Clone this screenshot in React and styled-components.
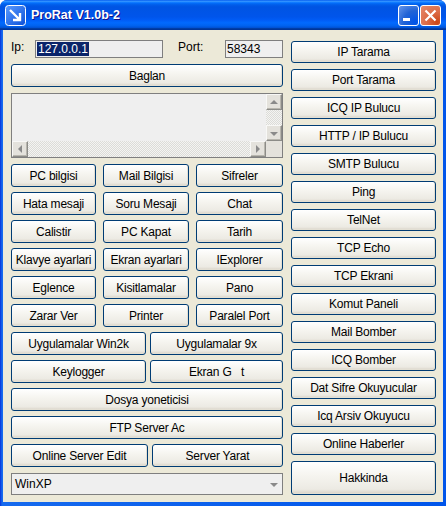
import React from "react";
import styled, { createGlobalStyle } from "styled-components";

const GlobalStyle = createGlobalStyle`
  body {
    margin: 0;
    background: #ffffff;
    font-family: "Liberation Sans", Arial, sans-serif;
  }
`;

const Window = styled.div`
  width: 446px;
  height: 506px;
  display: flex;
  flex-direction: column;
  border-radius: 7px 7px 0 0;
  overflow: hidden;
  background: #0842e0;
`;

const TitleBar = styled.div`
  height: 30px;
  flex: none;
  display: flex;
  align-items: center;
  padding: 0 5px;
  box-sizing: border-box;
  background: linear-gradient(
    180deg,
    #0058ee 0%,
    #3593ff 4%,
    #288eff 6%,
    #127dff 8%,
    #036ffc 10%,
    #0262ee 14%,
    #0057e5 20%,
    #0054e3 24%,
    #0055eb 56%,
    #005bf5 66%,
    #026afe 76%,
    #0062ef 86%,
    #0052d6 92%,
    #0040ab 94%,
    #003092 100%
  );
`;

const Title = styled.span`
  margin-left: 5px;
  color: #fff;
  font-weight: bold;
  font-size: 12.5px;
  text-shadow: 1px 1px #0f1089;
  flex: 1;
`;

const CaptionButtons = styled.div`
  display: flex;
  gap: 1px;
  margin-top: 1px;
`;

const CaptionButton = styled.div`
  width: 21px;
  height: 21px;
  box-sizing: border-box;
  border: 1px solid #fff;
  border-radius: 3px;
  display: flex;
  align-items: center;
  justify-content: center;
  background: ${(p) =>
    p.$close
      ? "radial-gradient(circle at 85% 85%, #cc4616 0%, #dc6b46 45%, #e58a6c 100%)"
      : "radial-gradient(circle at 85% 85%, #0054e9 0%, #2263d5 50%, #6696eb 100%)"};
`;

const Frame = styled.div`
  flex: 1;
  display: flex;
  padding: 0 3px 4px 3px;
  background: linear-gradient(90deg, #0831d9, #166aee 2px, #0055ea);
`;

const Body = styled.div`
  flex: 1;
  display: flex;
  gap: 8px;
  padding: 10px 7px 0 8px;
  background: #ece9d8;
  font-size: 12px;
  color: #000;
`;

const LeftCol = styled.div`
  width: 272px;
  display: flex;
  flex-direction: column;
  gap: 6px;
`;

const RightCol = styled.div`
  flex: 1;
  display: flex;
  flex-direction: column;
  gap: 6px;
  padding-top: 1px;
`;

const FieldRow = styled.div`
  height: 18px;
  display: flex;
  align-items: center;
`;

const Label = styled.span`
  width: ${(p) => p.$w}px;
  padding-left: ${(p) => p.$pad || 0}px;
  flex: none;
  margin-top: -4px;
`;

const TextBox = styled.div`
  width: ${(p) => p.$w}px;
  height: 18px;
  box-sizing: border-box;
  border: 1px solid #7f7f7f;
  background: #efefef;
  display: flex;
  align-items: center;
  padding-left: 1px;
  line-height: 14px;
`;

const Selected = styled.span`
  background: #0a246a;
  color: #fff;
  padding: 0 1px;
`;

const XpButton = styled.button`
  height: ${(p) => p.$h || 23}px;
  width: 100%;
  box-sizing: border-box;
  border: 1px solid #003c74;
  border-radius: 3px;
  background: linear-gradient(180deg, #ffffff 0%, #f6f5f0 40%, #eceae3 85%, #d8d2c6 100%);
  box-shadow: inset -1px -1px 0 #e3dfd3;
  font-family: "Liberation Sans", Arial, sans-serif;
  font-size: 12px;
  letter-spacing: -0.2px;
  color: #000;
  padding: 0;
  white-space: nowrap;
`;

const OutputBox = styled.div`
  height: 65px;
  box-sizing: border-box;
  border: 1px solid #7f7f7f;
  background: #efefef;
  display: grid;
  grid-template-columns: 1fr 16px;
  grid-template-rows: 1fr 16px;
`;

const ScrollTrack = styled.div`
  display: flex;
  flex-direction: ${(p) => (p.$vertical ? "column" : "row")};
  justify-content: space-between;
  background: repeating-conic-gradient(#f4f4f2 0 25%, #dcdcd8 0 50%) 0 0 / 2px 2px;
`;

const ScrollButton = styled.div`
  width: 16px;
  height: 16px;
  box-sizing: border-box;
  background: #e4e2dc;
  border: 1px solid;
  border-color: #f8f8f6 #8c8c88 #8c8c88 #f8f8f6;
  box-shadow: inset -1px -1px 0 #b8b6ae;
  display: flex;
  align-items: center;
  justify-content: center;
`;

const Corner = styled.div`
  background: #e4e2dc;
`;

const Arrow = styled.div`
  width: 0;
  height: 0;
  border: 4px solid transparent;
  ${(p) =>
    p.$dir === "up" &&
    "border-bottom-color: #8a8a8a; border-top-width: 0; margin-top: -1px;"}
  ${(p) =>
    p.$dir === "down" &&
    "border-top-color: #8a8a8a; border-bottom-width: 0; margin-top: 1px;"}
  ${(p) =>
    p.$dir === "left" &&
    "border-right-color: #8a8a8a; border-width: 4px 4px 4px 0;"}
  ${(p) =>
    p.$dir === "right" &&
    "border-left-color: #8a8a8a; border-width: 4px 0 4px 4px;"}
`;

const ButtonStack = styled.div`
  display: flex;
  flex-direction: column;
  gap: 5px;
`;

const ButtonRow = styled.div`
  display: grid;
  grid-template-columns: ${(p) => p.$cols};
  column-gap: ${(p) => p.$gap || 4}px;
`;

const Combo = styled.div`
  height: 22px;
  box-sizing: border-box;
  border: 1px solid #7f7f7f;
  background: #efefef;
  display: flex;
  align-items: center;
  justify-content: space-between;
  padding: 0 0 0 3px;
`;

const ComboArrow = styled.div`
  width: 16px;
  height: 20px;
  display: flex;
  align-items: center;
  justify-content: center;
`;

const AppIcon = () => (
  <svg width="21" height="21" viewBox="0 0 21 21">
    <defs>
      <linearGradient id="ig" x1="0" y1="0" x2="1" y2="1">
        <stop offset="0" stopColor="#5b9cff" />
        <stop offset="1" stopColor="#0b4fd8" />
      </linearGradient>
    </defs>
    <rect x="0.5" y="0.5" width="20" height="20" rx="3" fill="url(#ig)" stroke="#fff" />
    <path d="M5 5 L14.5 14.5 M15 8 V15 H8" stroke="#fff" strokeWidth="2.4" fill="none" />
  </svg>
);

const grid3 = [
  ["PC bilgisi", "Mail Bilgisi", "Sifreler"],
  ["Hata mesaji", "Soru Mesaji", "Chat"],
  ["Calistir", "PC Kapat", "Tarih"],
  ["Klavye ayarlari", "Ekran ayarlari", "IExplorer"],
  ["Eglence", "Kisitlamalar", "Pano"],
  ["Zarar Ver", "Printer", "Paralel Port"],
];

const rightButtons = [
  "IP Tarama",
  "Port Tarama",
  "ICQ IP Bulucu",
  "HTTP / IP Bulucu",
  "SMTP Bulucu",
  "Ping",
  "TelNet",
  "TCP Echo",
  "TCP Ekrani",
  "Komut Paneli",
  "Mail Bomber",
  "ICQ Bomber",
  "Dat Sifre Okuyucular",
  "Icq Arsiv Okuyucu",
  "Online Haberler",
];

export default function App() {
  return (
    <>
      <GlobalStyle />
      <Window>
        <TitleBar>
          <AppIcon />
          <Title>ProRat V1.0b-2</Title>
          <CaptionButtons>
            <CaptionButton>
              <svg width="19" height="19" viewBox="0 0 19 19">
                <rect x="4" y="12" width="7" height="3" fill="#fff" />
              </svg>
            </CaptionButton>
            <CaptionButton $close>
              <svg width="19" height="19" viewBox="0 0 19 19">
                <path d="M4.5 4.5 L14.5 14.5 M14.5 4.5 L4.5 14.5" stroke="#fff" strokeWidth="2.2" />
              </svg>
            </CaptionButton>
          </CaptionButtons>
        </TitleBar>
        <Frame>
          <Body>
            <LeftCol>
              <FieldRow>
                <Label $w={24}>Ip:</Label>
                <TextBox $w={128}>
                  <Selected>127.0.0.1</Selected>
                </TextBox>
                <Label $w={47} $pad={15}>Port:</Label>
                <TextBox $w={58}>58343</TextBox>
              </FieldRow>
              <XpButton>Baglan</XpButton>
              <OutputBox>
                <div />
                <ScrollTrack $vertical>
                  <ScrollButton>
                    <Arrow $dir="up" />
                  </ScrollButton>
                  <ScrollButton>
                    <Arrow $dir="down" />
                  </ScrollButton>
                </ScrollTrack>
                <ScrollTrack>
                  <ScrollButton>
                    <Arrow $dir="left" />
                  </ScrollButton>
                  <ScrollButton>
                    <Arrow $dir="right" />
                  </ScrollButton>
                </ScrollTrack>
                <Corner />
              </OutputBox>
              <ButtonStack>
                {grid3.map((row) => (
                  <ButtonRow key={row[0]} $cols="85px 86px 1fr" $gap={7}>
                    {row.map((label) => (
                      <XpButton key={label}>{label}</XpButton>
                    ))}
                  </ButtonRow>
                ))}
                <ButtonRow $cols="135px 1fr">
                  <XpButton>Uygulamalar Win2k</XpButton>
                  <XpButton>Uygulamalar 9x</XpButton>
                </ButtonRow>
                <ButtonRow $cols="135px 1fr">
                  <XpButton>Keylogger</XpButton>
                  <XpButton>Ekran G&nbsp;&nbsp;&nbsp;t</XpButton>
                </ButtonRow>
                <XpButton>Dosya yoneticisi</XpButton>
                <XpButton>FTP Server Ac</XpButton>
                <ButtonRow $cols="137px 1fr">
                  <XpButton>Online Server Edit</XpButton>
                  <XpButton>Server Yarat</XpButton>
                </ButtonRow>
              </ButtonStack>
              <Combo>
                <span>WinXP</span>
                <ComboArrow>
                  <Arrow $dir="down" />
                </ComboArrow>
              </Combo>
            </LeftCol>
            <RightCol>
              {rightButtons.map((label) => (
                <XpButton key={label} $h={22}>
                  {label}
                </XpButton>
              ))}
              <XpButton $h={34}>Hakkinda</XpButton>
            </RightCol>
          </Body>
        </Frame>
      </Window>
    </>
  );
}
